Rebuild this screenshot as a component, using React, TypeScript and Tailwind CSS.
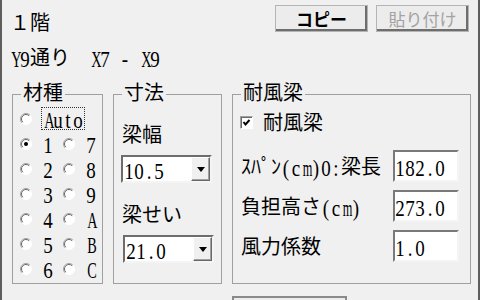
import React from 'react';

// Latin chars sit in 10px cells like the old bitmap font; CJK stays in the gothic
function Tx({ s, className }: { s: string; className?: string }) {
  const chars = Array.from(s);
  return (
    <span className={className}>
      {chars.map((c, i) => {
        if (!/^[\x20-\x7e]$/.test(c)) return <span key={i}>{c}</span>;
        if (c === ' ') return <span key={i} className="inline-block w-[10px]" />;
        const upper = /[A-Z]/.test(c);
        const wide = c === 'm' || c === 'w';
        return (
          <span
            key={i}
            className={`inline-block w-[10px] text-center font-['Liberation_Serif',serif] text-[19px] leading-none scale-y-[1.25] ${
              upper ? 'scale-x-[0.75]' : wide ? 'scale-x-[0.65]' : ''
            }`}
          >
            {c}
          </span>
        );
      })}
    </span>
  );
}

function Radio({ checked }: { checked?: boolean }) {
  return (
    <svg width="12" height="12" viewBox="0 0 12 12" className="shrink-0">
      <circle cx="6" cy="6" r="5.5" fill="#fff" />
      <path d="M2.1 9.9 A5.5 5.5 0 0 1 9.9 2.1" stroke="#a0a0a0" strokeWidth="1" fill="none" />
      <path d="M2.8 9.2 A4.5 4.5 0 0 1 9.2 2.8" stroke="#696969" strokeWidth="1" fill="none" />
      <path d="M9.9 2.1 A5.5 5.5 0 0 1 2.1 9.9" stroke="#fff" strokeWidth="1" fill="none" />
      {checked && <circle cx="6" cy="6" r="2" fill="#000" />}
    </svg>
  );
}

function Checkbox() {
  return (
    <div className="w-[13px] h-[13px] shrink-0 bg-white border border-t-[#a0a0a0] border-l-[#a0a0a0] border-b-white border-r-white shadow-[inset_1px_1px_0_#696969]">
      <svg width="11" height="11" viewBox="0 0 11 11">
        <path d="M2.5 5 L4.5 7.5 L8.5 3" stroke="#000" strokeWidth="2" fill="none" />
      </svg>
    </div>
  );
}

function Combo({ value, className }: { value: string; className?: string }) {
  return (
    <div
      className={`flex h-[28px] w-[91px] bg-white border-2 border-t-[#6d6d6d] border-l-[#6d6d6d] border-b-[#f4f4f4] border-r-[#f4f4f4] ${className ?? ''}`}
    >
      <div className="flex-1 flex items-center pl-[1px] pt-[1px]">
        <Tx s={value} />
      </div>
      <div className="w-[19px] flex items-center justify-center bg-[#f0f0f0] border border-t-white border-l-white border-b-[#696969] border-r-[#696969] shadow-[inset_-1px_-1px_0_#a0a0a0]">
        <svg width="8" height="5" viewBox="0 0 8 5">
          <path d="M0 0 H8 L4 5 Z" fill="#000" />
        </svg>
      </div>
    </div>
  );
}

function Field({ value }: { value: string }) {
  return (
    <div className="flex items-center h-[32px] w-[66px] bg-white pt-[1px] border-2 border-t-[#7a7a7a] border-l-[#7a7a7a] border-b-[#f4f4f4] border-r-[#f4f4f4]">
      <Tx s={value} />
    </div>
  );
}

function Button({ label, disabled }: { label: string; disabled?: boolean }) {
  return (
    <div
      className={`w-[93px] h-[27px] flex items-center justify-center bg-[#ececec] border border-[#b4b4b4] shadow-[inset_-2px_-2px_0_#6e6e6e] text-[17px] ${
        disabled ? 'text-[#a3a3a3]' : 'font-bold text-black'
      }`}
    >
      {label}
    </div>
  );
}

// group box: the caption sits over the top border line
function Group({ title, className, children }: { title: string; className?: string; children: React.ReactNode }) {
  return (
    <div className={`relative h-[190px] border border-[#a0a0a0] ${className ?? ''}`}>
      <div className="absolute -top-[13px] left-[8px] px-[2px] bg-[#f0f0f0] whitespace-nowrap">{title}</div>
      {children}
    </div>
  );
}

const rows: [string, string][] = [
  ['1', '7'],
  ['2', '8'],
  ['3', '9'],
  ['4', 'A'],
  ['5', 'B'],
  ['6', 'C'],
];

export default function App() {
  return (
    <div className="w-[480px] h-[300px] overflow-hidden bg-[#f0f0f0] border-x-2 border-[#5e5e5e] font-['Noto_Sans_CJK_JP',sans-serif] text-[20px] leading-[20px] text-black">
      {/* header */}
      <div className="flex pt-[5px] pr-[9px]">
        <div className="pl-[8px] pt-[7px]">
          <div className="h-[20px]">１階</div>
          <div className="h-[20px] mt-[15px]">
            <Tx s="Y9通り  X7 - X9" />
          </div>
        </div>
        <div className="ml-auto flex gap-[8px] h-[27px]">
          <Button label="コピー" />
          <Button label="貼り付け" disabled />
        </div>
      </div>

      {/* groups */}
      <div className="flex gap-[10px] pl-[10px] mt-[27px]">
        <Group title="材種" className="w-[91px] pt-[11px]">
          <div className="flex items-center h-[25px] pl-[7px]">
            <Radio />
            <div className="ml-[9px] px-[1px] h-[23px] flex items-center border border-dotted border-[#333]">
              <Tx s="Auto" />
            </div>
          </div>
          {rows.map(([a, b]) => (
            <div key={a} className="flex items-center h-[25px] pl-[7px]">
              <Radio checked={a === '1'} />
              <div className="ml-[11px] w-[20px]">
                <Tx s={a} />
              </div>
              <Radio />
              <div className="ml-[11px]">
                <Tx s={b} />
              </div>
            </div>
          ))}
        </Group>

        <Group title="寸法" className="w-[109px] pt-[29px] pl-[8px]">
          <div className="h-[20px]">梁幅</div>
          <Combo value="10.5" className="mt-[11px] -ml-[1px]" />
          <div className="mt-[21px] h-[20px]">梁せい</div>
          <Combo value="21.0" className="mt-[11px] ml-[1px]" />
        </Group>

        <Group title="耐風梁" className="w-[239px] pt-[17px]">
          <div className="flex items-center gap-[10px] h-[20px] pl-[7px]">
            <Checkbox />
            <span>耐風梁</span>
          </div>
          <div className="flex flex-col gap-[8px] mt-[18px] pl-[8px] pr-[11px]">
            <div className="flex items-center justify-between">
              <Tx s="ｽﾊﾟﾝ(cm)0:梁長" />
              <Field value="182.0" />
            </div>
            <div className="flex items-center justify-between">
              <Tx s="負担高さ(cm)" />
              <Field value="273.0" />
            </div>
            <div className="flex items-center justify-between">
              <Tx s="風力係数" />
              <Field value="1.0" />
            </div>
          </div>
        </Group>
      </div>

      {/* bottom button, cut off by the window */}
      <div className="ml-[230px] mt-[12px] w-[115px] h-[20px] border-2 border-b-0 border-[#8a8a8a] bg-[#ececec]" />
    </div>
  );
}
